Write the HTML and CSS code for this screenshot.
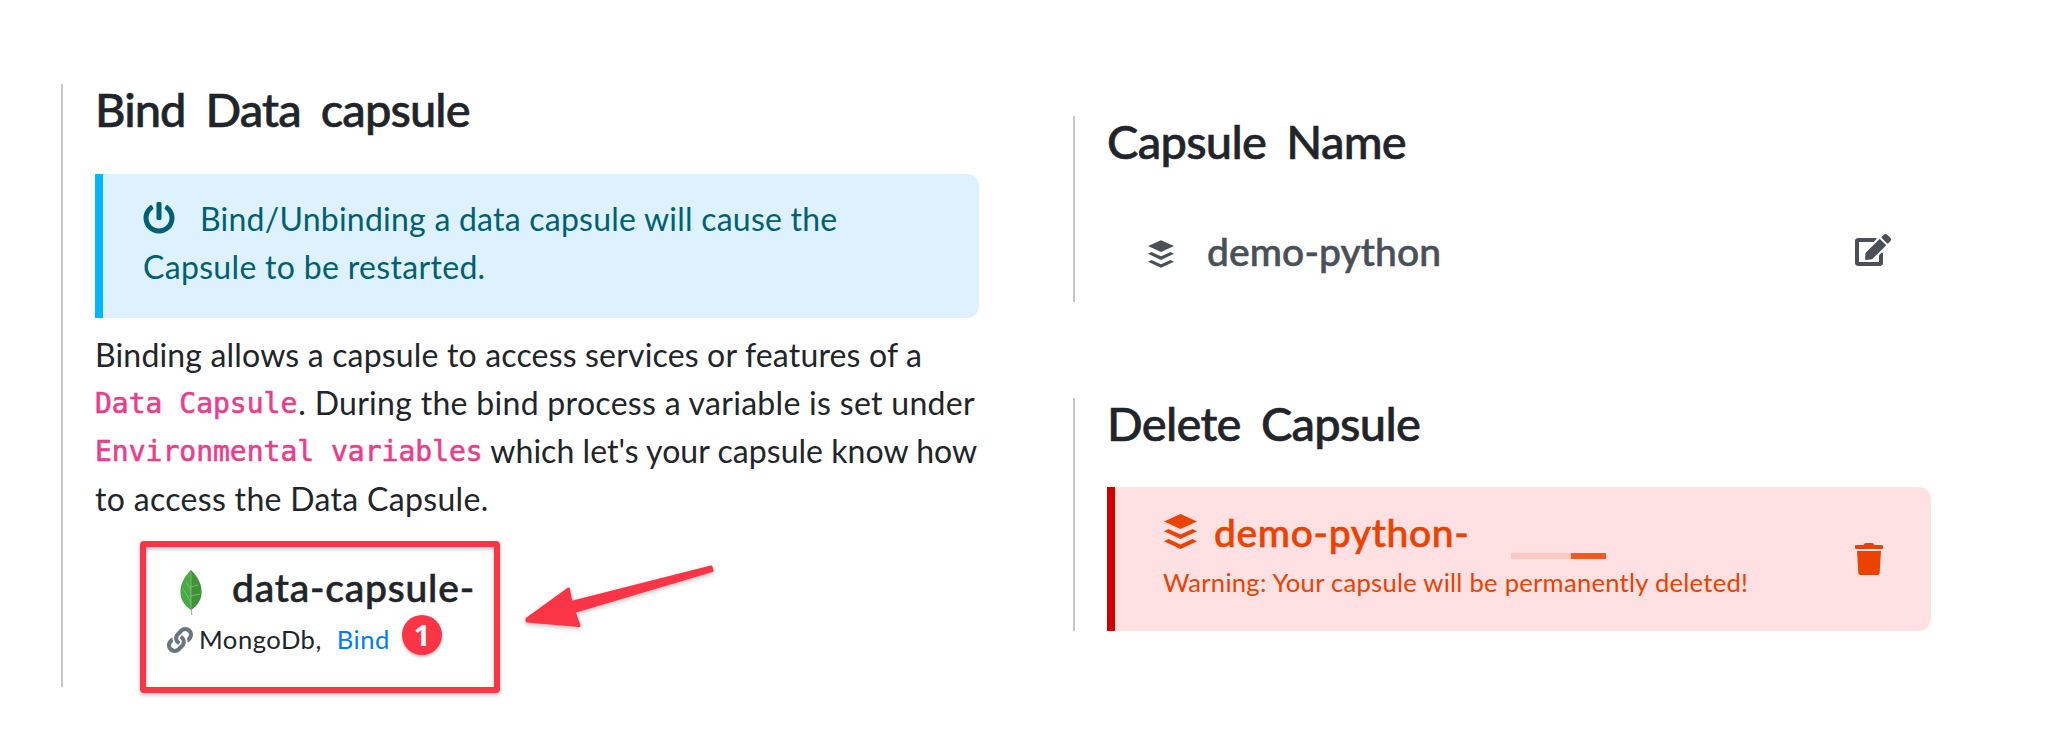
FILE: index.html
```
<!DOCTYPE html>
<html lang="en">
<head>
<meta charset="utf-8">
<title>Capsule configuration</title>
<link rel="stylesheet" href="styles.css">
</head>
<body>
<main class="page">
  <section class="panel bind">
    <h2 class="title"><span class="t t-bind">Bind Data capsule</span></h2>
    <div class="alert info">
      <div class="line"><svg class="power" viewBox="0 0 512 512"><path d="M400 54.1c63 45 104 118.6 104 201.9 0 136.8-110.8 247.7-247.5 248C120 504.3 8.2 393 8 256.4 7.9 173.1 48.9 99.3 111.8 54.2c11.7-8.3 28-4.8 35 7.7L162.6 90c5.9 10.5 3.1 23.8-6.6 31-41.5 30.8-68 79.6-68 134.9-.1 92.3 74.5 168.1 168 168.1 91.6 0 168.6-74.2 168-169.1-.3-51.8-24.7-101.8-68.1-134-9.7-7.2-12.4-20.5-6.5-30.9l15.8-28.1c7-12.4 23.2-16.1 34.8-7.8zM296 264V24c0-13.3-10.7-24-24-24h-32c-13.3 0-24 10.7-24 24v240c0 13.3 10.7 24 24 24h32c13.3 0 24-10.7 24-24z"/></svg><span class="t a1">Bind/Unbinding a data capsule will cause the</span></div>
      <div class="line"><span class="t a2">Capsule to be restarted.</span></div>
    </div>
    <div class="copy">
      <div class="line"><span class="t p1">Binding allows a capsule to access services or features of a</span></div>
      <div class="line"><code>Data Capsule</code><span class="t p2">. During the bind process a variable is set under</span></div>
      <div class="line"><code>Environmental variables</code><span class="t p3">&nbsp;which let's your capsule know how</span></div>
      <div class="line"><span class="t p4">to access the Data Capsule.</span></div>
    </div>
    <div class="capsule">
      <div class="capsule-name">
        <svg class="leaf" viewBox="0 0 22 46"><path d="M10.6 38h1.2l.5 7h-1.2z" fill="#b9aaa6"/><path d="M11 0C5 6 .4 13 .4 22c0 8 4.600 14 10.600 18z" fill="#49a942"/><path d="M11 0c6 6 10.600 13 10.600 22 0 8-4.600 14-10.600 18z" fill="#3f9238"/><path d="M11 2v38M6 12l5 8M3 19l8 13M11 17l7-2M11 26l9-2" fill="none" stroke="#8cc98a" stroke-width=".7"/></svg>
        <span class="t n1">data-capsule-</span>
      </div>
      <div class="capsule-meta">
        <svg class="link" viewBox="0 0 512 512"><path d="M326.612 185.391c59.747 59.809 58.927 155.698.36 214.59-.11.12-.24.25-.36.37l-67.2 67.2c-59.27 59.27-155.699 59.262-214.96 0-59.27-59.26-59.27-155.7 0-214.96l37.106-37.106c9.84-9.84 26.786-3.3 27.294 10.606.648 17.722 3.826 35.527 9.69 52.721 1.986 5.822.567 12.262-3.783 16.612l-13.087 13.087c-28.026 28.026-28.905 73.66-1.155 101.96 28.024 28.579 74.086 28.749 102.325.51l67.2-67.19c28.191-28.191 28.073-73.757 0-101.83-3.701-3.694-7.429-6.564-10.341-8.569a16.037 16.037 0 0 1-6.947-12.606c-.396-10.567 3.348-21.456 11.698-29.806l21.054-21.055c5.521-5.521 14.182-6.199 20.584-1.731a152.482 152.482 0 0 1 20.522 17.197zM467.547 44.449c-59.261-59.262-155.69-59.27-214.96 0l-67.2 67.2c-.12.12-.25.25-.36.37-58.566 58.892-59.387 154.781.36 214.59a152.454 152.454 0 0 0 20.521 17.196c6.402 4.468 15.064 3.789 20.584-1.731l21.054-21.055c8.35-8.35 12.094-19.239 11.698-29.806a16.037 16.037 0 0 0-6.947-12.606c-2.912-2.005-6.64-4.875-10.341-8.569-28.073-28.073-28.191-73.639 0-101.83l67.2-67.19c28.239-28.239 74.3-28.069 102.325.51 27.75 28.3 26.872 73.934-1.155 101.96l-13.087 13.087c-4.35 4.35-5.769 10.79-3.783 16.612 5.864 17.194 9.042 34.999 9.69 52.721.509 13.906 17.454 20.446 27.294 10.606l37.106-37.106c59.271-59.259 59.271-155.699.001-214.959z"/></svg>
        <span class="t m1">MongoDb,</span><a class="t m2">Bind</a>
      </div>
    </div>
  </section>
  <div class="side">
    <section class="panel name">
      <h2 class="title"><span class="t t-name">Capsule Name</span></h2>
      <div class="name-row">
        <svg class="stack small" viewBox="0 0 33 35"><path d="M16.500 0 33 7.500 16.500 15 0 7.500z"/><path d="M0 17.200 4.500 15 16.500 20.500 28.500 15 33 17.200 16.500 25z"/><path d="M0 27.200 4.500 25 16.500 30.500 28.500 25 33 27.200 16.500 35z"/></svg>
        <span class="t n2">demo-python</span>
        <svg class="edit" viewBox="0 0 576 512"><path d="M402.6 83.2l90.2 90.2c3.8 3.8 3.8 10 0 13.8L274.4 405.6l-92.8 10.3c-12.4 1.4-22.9-9.1-21.500-21.500l10.300-92.800L388.800 83.200c3.800-3.800 10-3.800 13.800 0zm162-22.900l-48.800-48.800c-15.200-15.200-39.900-15.200-55.200 0l-35.400 35.400c-3.800 3.800-3.800 10 0 13.800l90.200 90.200c3.800 3.800 10 3.800 13.800 0l35.400-35.400c15.200-15.300 15.200-40 0-55.200zM384 346.200V448H64V128h229.800c3.200 0 6.200-1.300 8.500-3.500l40-40c7.600-7.600 2.200-20.500-8.500-20.500H48C21.500 64 0 85.500 0 112v352c0 26.500 21.500 48 48 48h352c26.500 0 48-21.500 48-48V306.200c0-10.700-12.900-16-20.500-8.500l-40 40c-2.200 2.300-3.500 5.300-3.500 8.500z"/></svg>
      </div>
    </section>
    <section class="panel delete">
      <h2 class="title"><span class="t t-del">Delete Capsule</span></h2>
      <div class="alert danger">
        <div class="danger-text">
          <div class="danger-name">
            <svg class="stack" viewBox="0 0 33 35"><path d="M16.500 0 33 7.500 16.500 15 0 7.500z"/><path d="M0 17.200 4.500 15 16.500 20.500 28.500 15 33 17.200 16.500 25z"/><path d="M0 27.200 4.500 25 16.500 30.500 28.500 25 33 27.200 16.500 35z"/></svg>
            <span class="t n3">demo-python-</span>
            <i class="bar"></i>
          </div>
          <div class="warning"><span class="t w1">Warning: Your capsule will be permanently deleted!</span></div>
        </div>
        <svg class="trash" viewBox="0 0 28 32"><path d="M1 2h7.500l1-1.500Q10 0 11 0h6q1 0 1.500.5l1 1.500H27q1 0 1 1v2q0 1-1 1H1Q0 6 0 5V3q0-1 1-1zM2 8h24l-1.300 21.200Q24.500 32 22 32H6q-2.500 0-2.700-2.800z"/></svg>
      </div>
    </section>
  </div>
</main>
<div class="highlight"></div>
<div class="badge">1</div>
<svg class="arrow" viewBox="0 0 200 80"><path d="M7 59 48.500 29 51 42.500 191 7 192 10.500 54 51.500 59 65.500 7 61z" stroke="#fb3545" stroke-width="3" stroke-linejoin="round"/></svg>
</body>
</html>
```
FILE: styles.css
```
* { box-sizing: border-box; }
body { margin: 0; width: 2058px; height: 756px; overflow: hidden; position: relative; background: #fff; color: #212529; font-family: Lato, "Open Sans", sans-serif; font-size: 32px; }
svg { display: block; fill: currentColor; flex: none; overflow: visible; }
.t { white-space: nowrap; }
.page { display: flex; align-items: flex-start; padding: 84px 0 0 61px; }
.panel { border-left: 2px solid #c8c8c8; padding-left: 32px; }
.bind { width: 918px; height: 603px; margin-right: 94px; }
.side { width: 858px; padding-top: 32px; }
.title { margin: 0; font-size: 47px; line-height: 50px; font-weight: 500; height: 50px; word-spacing: 9px; letter-spacing: -.7px; -webkit-text-stroke: .6px currentColor; }
.t-bind { letter-spacing: -.9px; }
.alert { height: 144px; border-radius: 0 12px 12px 0; border-left: 8px solid; padding: 20px 40px; }
.info { margin-top: 40px; background: #ddf1ff; border-color: #00b7ff; color: #005f73; }
.line { display: flex; height: 48px; line-height: 50px; }
.power { width: 32px; height: 32px; margin: 8px 25px 0 0; }
.copy { margin-top: 12px; }
.a1 { letter-spacing: .23px; }
.a2, .p4 { letter-spacing: .32px; }
.p1 { letter-spacing: .17px; }
.p2 { letter-spacing: .3px; margin-left: 1px; }
.p3 { letter-spacing: .04px; }
code { font: 28px/52px "DejaVu Sans Mono", monospace; color: #e83e8c; -webkit-text-stroke: .6px currentColor; }
.capsule { margin-top: 40px; }
.capsule-name, .name-row, .danger-name { display: flex; height: 48px; line-height: 50px; font-size: 39px; font-weight: 500; -webkit-text-stroke: .6px currentColor; }
.capsule-name { padding-left: 85px; }
.n1 { letter-spacing: .8px; }
.n2 { letter-spacing: .1px; }
.n3 { letter-spacing: .65px; }
.leaf { width: 22px; height: 46px; margin: 8px 30px 0 0; }
.leaf, .stack { -webkit-text-stroke: 0; }
.capsule-meta { display: flex; height: 38px; line-height: 38px; margin-top: 10px; padding-left: 72px; font-size: 25.6px; }
.link { width: 26px; height: 26px; margin: 7px 6px 0 0; color: #6c757d; }
.m1 { letter-spacing: .5px; }
.m2 { color: #007bff; margin-left: 15px; letter-spacing: .5px; }
.name { height: 186px; }
.name-row { margin-top: 60px; padding: 0 40px 0 41px; color: #495057; }
.stack { width: 33px; height: 35px; margin: 7px 17px 0 0; }
.stack.small { width: 26px; height: 28px; margin: 14px 33px 0 0; }
.edit { width: 36px; height: 32px; margin: 8px 0 0 auto; }
.delete { height: 233px; margin-top: 96px; }
.danger { display: flex; margin-top: 39px; background: #ffe1e4; border-color: #d00000; color: #eb4200; padding: 20px 48px 0 48px; }
.danger-name { position: relative; padding-left: 1px; }
.bar { position: absolute; left: 348px; top: 46px; width: 95px; height: 6px; background: linear-gradient(90deg, #fbc9c1 60px, #f25a22 60px); }
.warning { height: 38px; line-height: 39px; margin-top: 8px; font-size: 25.6px; letter-spacing: .26px; }
.trash { width: 28px; height: 32px; margin: 36px 0 0 auto; }
.highlight { position: absolute; left: 140px; top: 541px; width: 360px; height: 152px; border: 6px solid #fb3545; border-radius: 4px; filter: drop-shadow(0 2px 2px rgba(0,0,0,.25)); }
.badge { position: absolute; left: 402px; top: 615px; width: 40px; height: 40px; border-radius: 50%; background: #fb3545; color: #fff; text-align: center; font: 700 29px/39px "Open Sans", sans-serif; box-shadow: 0 2px 3px rgba(0,0,0,.25); }
.arrow { position: absolute; left: 520px; top: 560px; width: 200px; height: 80px; fill: #fb3545; filter: drop-shadow(0 2px 2px rgba(0,0,0,.25)); }
```
